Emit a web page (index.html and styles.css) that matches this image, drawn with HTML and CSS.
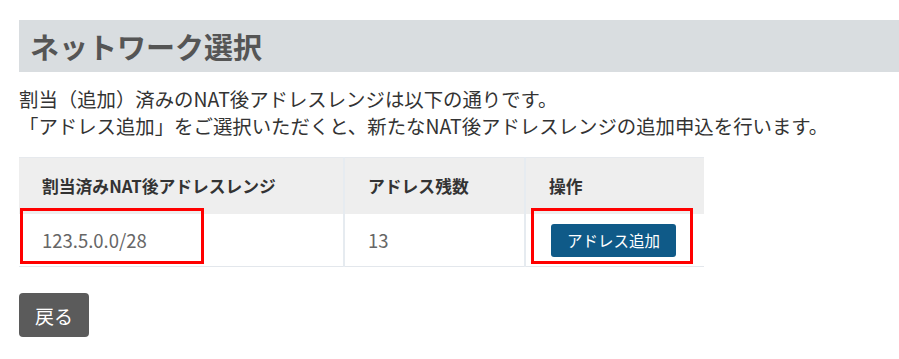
FILE: index.html
```html
<!DOCTYPE html>
<html>
<head>
	<meta charset="utf-8">
	<title>ネットワーク選択</title>
	<link rel="stylesheet" href="styles.css">
</head>
<body>
	<div class="main">
		<h2 class="page-title">ネットワーク選択</h2>

		<p class="lead">割当（追加）済みのNAT後アドレスレンジは以下の通りです。<br>「アドレス追加」をご選択いただくと、新たなNAT後アドレスレンジの追加申込を行います。</p>

		<div class="table-box">
			<table class="range-table">
				<thead>
					<tr>
						<th class="col-range">割当済みNAT後アドレスレンジ</th>
						<th class="col-count">アドレス残数</th>
						<th class="col-op">操作</th>
					</tr>
				</thead>
				<tbody>
					<tr>
						<td class="num">123.5.0.0/28</td>
						<td class="num">13</td>
						<td><button class="add-btn">アドレス追加</button></td>
					</tr>
				</tbody>
			</table>
			<span class="mark mark-range"></span>
			<span class="mark mark-op"></span>
		</div>

		<button class="back-btn">戻る</button>
	</div>
</body>
</html>
```

FILE: styles.css
```css
* {
	margin: 0;
	padding: 0;
}
body {
	font-family: "Noto Sans CJK JP", "Noto Sans", sans-serif;
	color: #333;
	background: #fff;
}
.main {
	padding: 20px 0 0 19px;
}

.page-title {
	height: 52px;
	padding-left: 11px;
	background: #d9dde0;
	color: #555;
	font-size: 29px;
	font-weight: bold;
	line-height: 52px;
}

.lead {
	margin: 13px 0 18px;
	font-size: 19.4px;
	line-height: 27px;
}

.table-box {
	position: relative;
	width: 685px;
	margin-bottom: 26px;
}
.range-table {
	width: 100%;
	border-collapse: collapse;
	border-top: 1px solid #e6e9ed;
	border-bottom: 1px solid #e3e7ec;
}
.range-table th {
	height: 56px;
	padding-left: 23px;
	background: #eee;
	font-size: 16.8px;
	font-weight: bold;
	text-align: left;
}
.range-table td {
	height: 52px;
	padding-left: 23px;
	color: #666;
	font-size: 17px;
}
.range-table td.num {
	font-size: 18.5px;
}
.range-table th + th,
.range-table td + td {
	border-left: 2px solid #e6ebf0;
}
.col-range {
	width: 301px;
}
.col-count {
	width: 156px;
}
.range-table td:last-child {
	padding-left: 25px;
}

.add-btn {
	width: 125px;
	height: 33px;
	border: 0;
	border-radius: 3px;
	background: #0f5a88;
	color: #fff;
	font-family: inherit;
	font-size: 15.5px;
	cursor: pointer;
}

.mark {
	position: absolute;
	top: 51px;
	height: 56px;
	border: 3px solid #f00;
	box-sizing: border-box;
}
.mark-range {
	left: 1px;
	width: 184px;
}
.mark-op {
	left: 512px;
	width: 162px;
}

.back-btn {
	width: 70px;
	height: 44px;
	border: 0;
	border-radius: 4px;
	background: #5b5b5b;
	color: #fff;
	font-family: inherit;
	font-size: 19px;
	cursor: pointer;
}
```
